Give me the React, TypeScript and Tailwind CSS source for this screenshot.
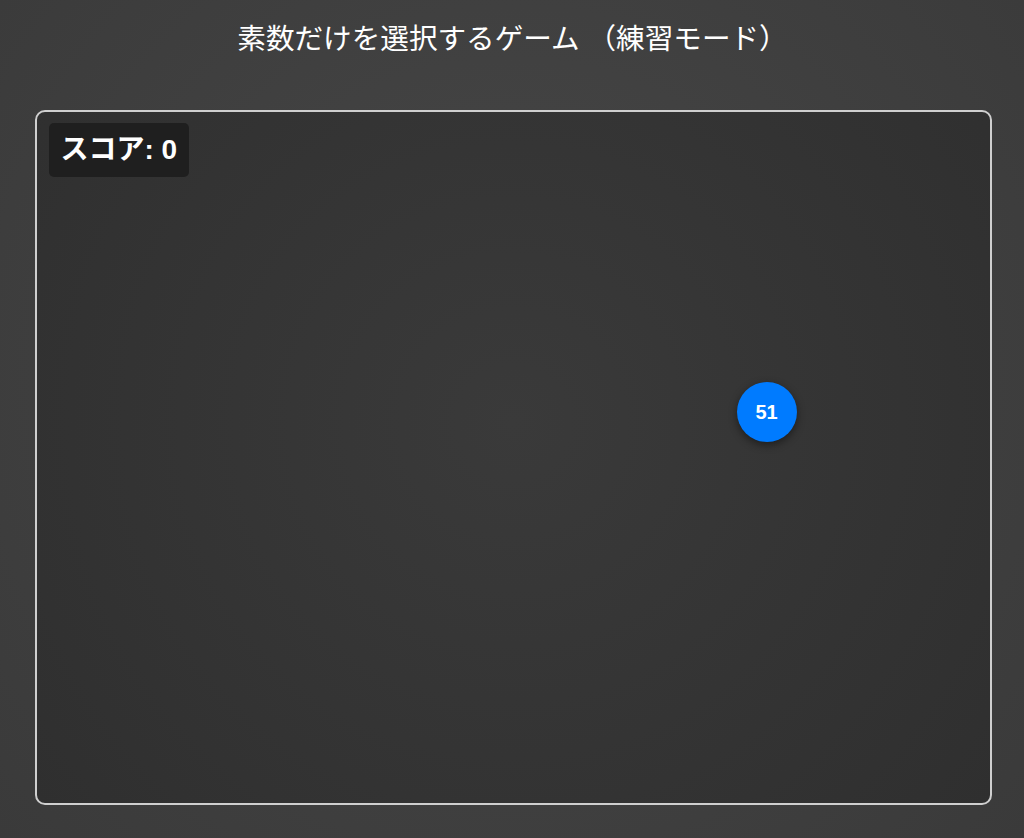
export default function App() {
  return (
    <div
      className="w-full h-[838px] flex flex-col items-center bg-[radial-gradient(circle_at_50%_45%,#474747_0%,#3a3a3a_100%)] text-white"
      style={{ fontFamily: '"Liberation Sans", "Noto Sans CJK JP", sans-serif' }}
    >
      <h1 className="mt-[18px] pl-[1px] text-[28.6px] leading-[42px] font-normal">素数だけを選択するゲーム （練習モード）</h1>
      <div className="relative mt-[50px] ml-[2px] w-[957px] h-[695px] rounded-[10px] border-2 border-[#cfcfcf] bg-[radial-gradient(circle_at_50%_45%,#3a3a3a_0%,#2f2f2f_100%)]">
        <div className="absolute left-[12px] top-[11px] rounded-[5px] bg-[#1f1f1f] px-[12px] py-[10px] text-[28px] leading-[34px] font-bold">
          スコア: 0
        </div>
        <button className="absolute left-[700px] top-[270px] w-[60px] h-[60px] rounded-full bg-[#007bff] text-[20px] font-bold text-white shadow-[0_3px_8px_rgba(0,0,0,0.45)] flex items-center justify-center">
          51
        </button>
      </div>
    </div>
  );
}
